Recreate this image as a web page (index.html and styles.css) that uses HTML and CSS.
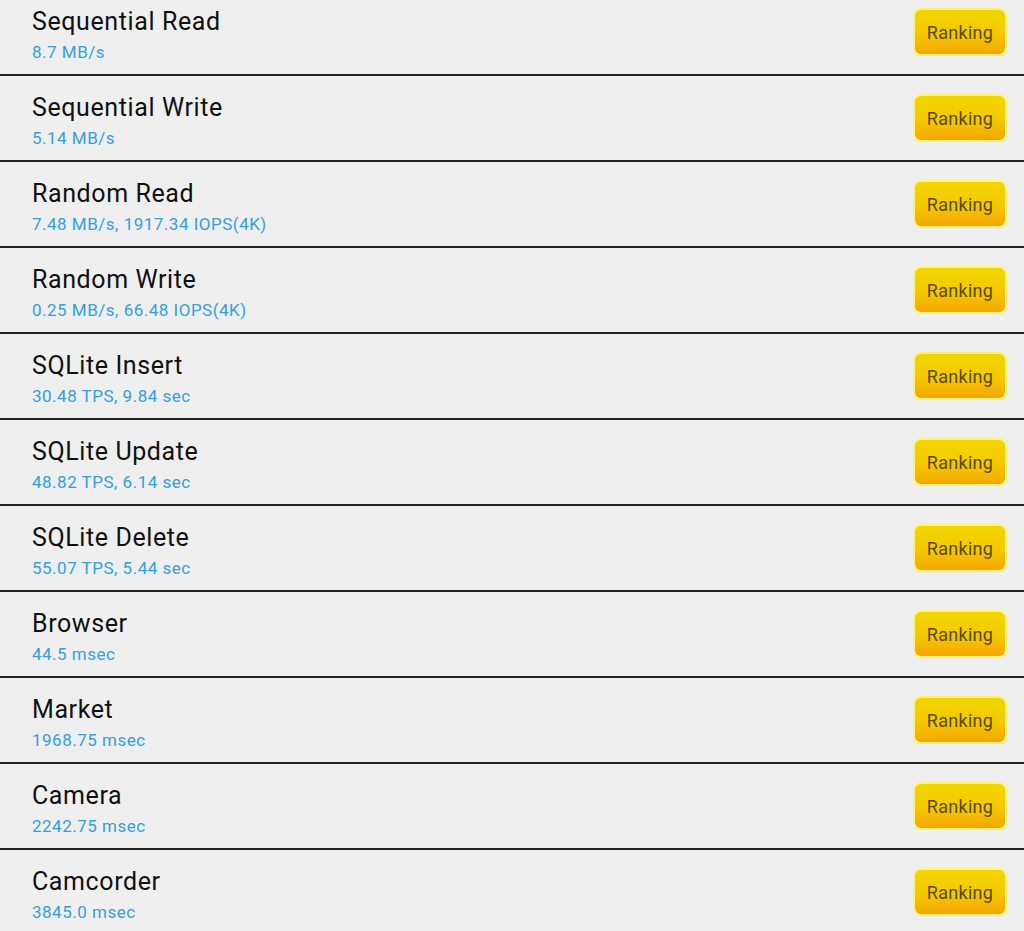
FILE: index.html
```html
<!DOCTYPE html>
<html lang="en">
<head>
  <meta charset="UTF-8">
  <meta name="viewport" content="width=device-width, initial-scale=1.0">
  <title>Storage Benchmark Results</title>
  <link rel="stylesheet" href="styles.css">
</head>
<body>
  <ul class="results">
    <li class="result">
      <div class="info">
        <div class="name">Sequential Read</div>
        <div class="value">8.7 MB/s</div>
      </div>
      <button class="ranking">Ranking</button>
    </li>
    <li class="result">
      <div class="info">
        <div class="name">Sequential Write</div>
        <div class="value">5.14 MB/s</div>
      </div>
      <button class="ranking">Ranking</button>
    </li>
    <li class="result">
      <div class="info">
        <div class="name">Random Read</div>
        <div class="value">7.48 MB/s, 1917.34 IOPS(4K)</div>
      </div>
      <button class="ranking">Ranking</button>
    </li>
    <li class="result">
      <div class="info">
        <div class="name">Random Write</div>
        <div class="value">0.25 MB/s, 66.48 IOPS(4K)</div>
      </div>
      <button class="ranking">Ranking</button>
    </li>
    <li class="result">
      <div class="info">
        <div class="name">SQLite Insert</div>
        <div class="value">30.48 TPS, 9.84 sec</div>
      </div>
      <button class="ranking">Ranking</button>
    </li>
    <li class="result">
      <div class="info">
        <div class="name">SQLite Update</div>
        <div class="value">48.82 TPS, 6.14 sec</div>
      </div>
      <button class="ranking">Ranking</button>
    </li>
    <li class="result">
      <div class="info">
        <div class="name">SQLite Delete</div>
        <div class="value">55.07 TPS, 5.44 sec</div>
      </div>
      <button class="ranking">Ranking</button>
    </li>
    <li class="result">
      <div class="info">
        <div class="name">Browser</div>
        <div class="value">44.5 msec</div>
      </div>
      <button class="ranking">Ranking</button>
    </li>
    <li class="result">
      <div class="info">
        <div class="name">Market</div>
        <div class="value">1968.75 msec</div>
      </div>
      <button class="ranking">Ranking</button>
    </li>
    <li class="result">
      <div class="info">
        <div class="name">Camera</div>
        <div class="value">2242.75 msec</div>
      </div>
      <button class="ranking">Ranking</button>
    </li>
    <li class="result">
      <div class="info">
        <div class="name">Camcorder</div>
        <div class="value">3845.0 msec</div>
      </div>
      <button class="ranking">Ranking</button>
    </li>
  </ul>
</body>
</html>
```

FILE: styles.css
```css
html, body {
  margin: 0;
  padding: 0;
  background-color: #efefef;
  font-family: Roboto, 'Noto Sans', sans-serif;
  overflow: hidden;
}
.results {
  list-style: none;
  margin: -10px 0 0 0;
  padding: 0;
}
.result {
  height: 84px;
  display: flex;
  align-items: center;
  justify-content: space-between;
  border-bottom: 2px solid #222;
  padding: 0 17px 0 32px;
}
.result:last-child {
  border-bottom: none;
}
.info {
  display: flex;
  flex-direction: column;
  padding-top: 5px;
}
.name {
  font-size: 25px;
  line-height: 28px;
  letter-spacing: 0.6px;
  color: #111;
}
.value {
  font-size: 17px;
  line-height: 20px;
  letter-spacing: 0.5px;
  margin-top: 6px;
  color: #33a0dc;
}
.ranking {
  width: 94px;
  height: 48px;
  border: 2px solid #fff27a;
  border-radius: 8px;
  background: linear-gradient(to bottom, #f2d600 0%, #f4c800 55%, #f6a600 100%);
  color: #5a4a05;
  font-family: Roboto, 'Noto Sans', sans-serif;
  font-size: 18px;
  letter-spacing: 0.3px;
  padding: 0;
  cursor: pointer;
}
```
